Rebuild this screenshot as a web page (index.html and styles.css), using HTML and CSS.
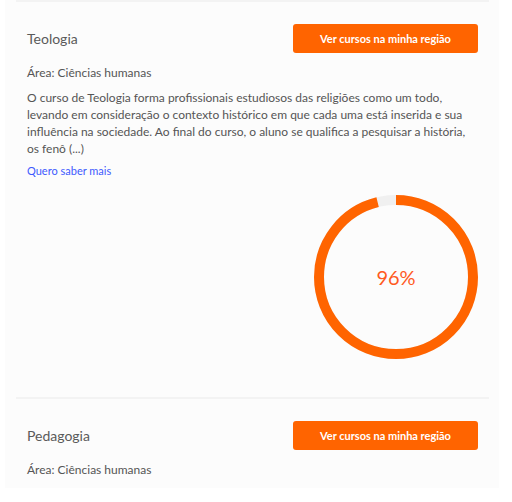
FILE: index.html
```html
<!DOCTYPE html>
<html lang="pt-BR">
<head>
    <meta charset="UTF-8">
    <meta name="viewport" content="width=device-width, initial-scale=1.0">
    <title>Cursos</title>
    <link rel="stylesheet" href="styles.css">
</head>
<body>
    <div class="lista">
        <div class="curso">
            <div class="topo">
                <h2 class="titulo">Teologia</h2>
                <a class="botao" href="#">Ver cursos na minha região</a>
            </div>
            <p class="area">Área: Ciências humanas</p>
            <p class="descricao">O curso de Teologia forma profissionais estudiosos das religiões como um todo, levando em consideração o contexto histórico em que cada uma está inserida e sua influência na sociedade. Ao final do curso, o aluno se qualifica a pesquisar a história, os fenô (...)</p>
            <a class="saiba" href="#">Quero saber mais</a>
            <div class="grafico">
                <svg class="anel" width="164" height="164" viewBox="0 0 164 164">
                    <circle cx="82" cy="82" r="77" fill="none" stroke="#f0f0f0" stroke-width="10"/>
                    <circle cx="82" cy="82" r="77" fill="none" stroke="#ff6400" stroke-width="10"
                        stroke-dasharray="464.4 483.8" transform="rotate(-90 82 82)"/>
                </svg>
                <span class="porcentagem">96%</span>
            </div>
        </div>
        <div class="curso">
            <div class="topo">
                <h2 class="titulo">Pedagogia</h2>
                <a class="botao" href="#">Ver cursos na minha região</a>
            </div>
            <p class="area">Área: Ciências humanas</p>
        </div>
    </div>
</body>
</html>
```

FILE: styles.css
```css
body {
    margin: 0;
    background-color: #ffffff;
    font-family: Lato, "Liberation Sans", sans-serif;
    color: #555555;
}
.lista {
    margin-left: 5px;
    width: 494px;
    padding: 0 10px 10px 11px;
    box-sizing: border-box;
    background-color: #fcfcfc;
}
.curso {
    border-top: 2px solid #f3f3f3;
    padding: 22px 11px 0;
}
.topo {
    display: flex;
    justify-content: space-between;
    align-items: center;
}
.titulo {
    margin: 0;
    font-size: 14px;
    font-weight: normal;
    color: #5a5a5a;
}
.botao {
    display: flex;
    justify-content: center;
    align-items: center;
    width: 185px;
    height: 29px;
    background-color: #ff6400;
    color: white;
    border-radius: 3px;
    font-size: 11px;
    font-weight: bold;
    text-decoration: none;
}
.area {
    margin: 12px 0 0;
    font-size: 12px;
    line-height: 16px;
}
.descricao {
    margin: 8px 0 0;
    font-size: 12px;
    line-height: 17px;
}
.saiba {
    display: block;
    margin-top: 7px;
    font-size: 11px;
    color: #3d5afe;
    text-decoration: none;
}
.grafico {
    position: relative;
    width: 164px;
    height: 164px;
    margin: 18px 0 0 auto;
    padding-bottom: 38px;
}
.anel {
    display: block;
}
.porcentagem {
    position: absolute;
    top: 0;
    left: 0;
    width: 164px;
    height: 164px;
    display: flex;
    justify-content: center;
    align-items: center;
    font-size: 20px;
    color: #ff5a1f;
}
```
